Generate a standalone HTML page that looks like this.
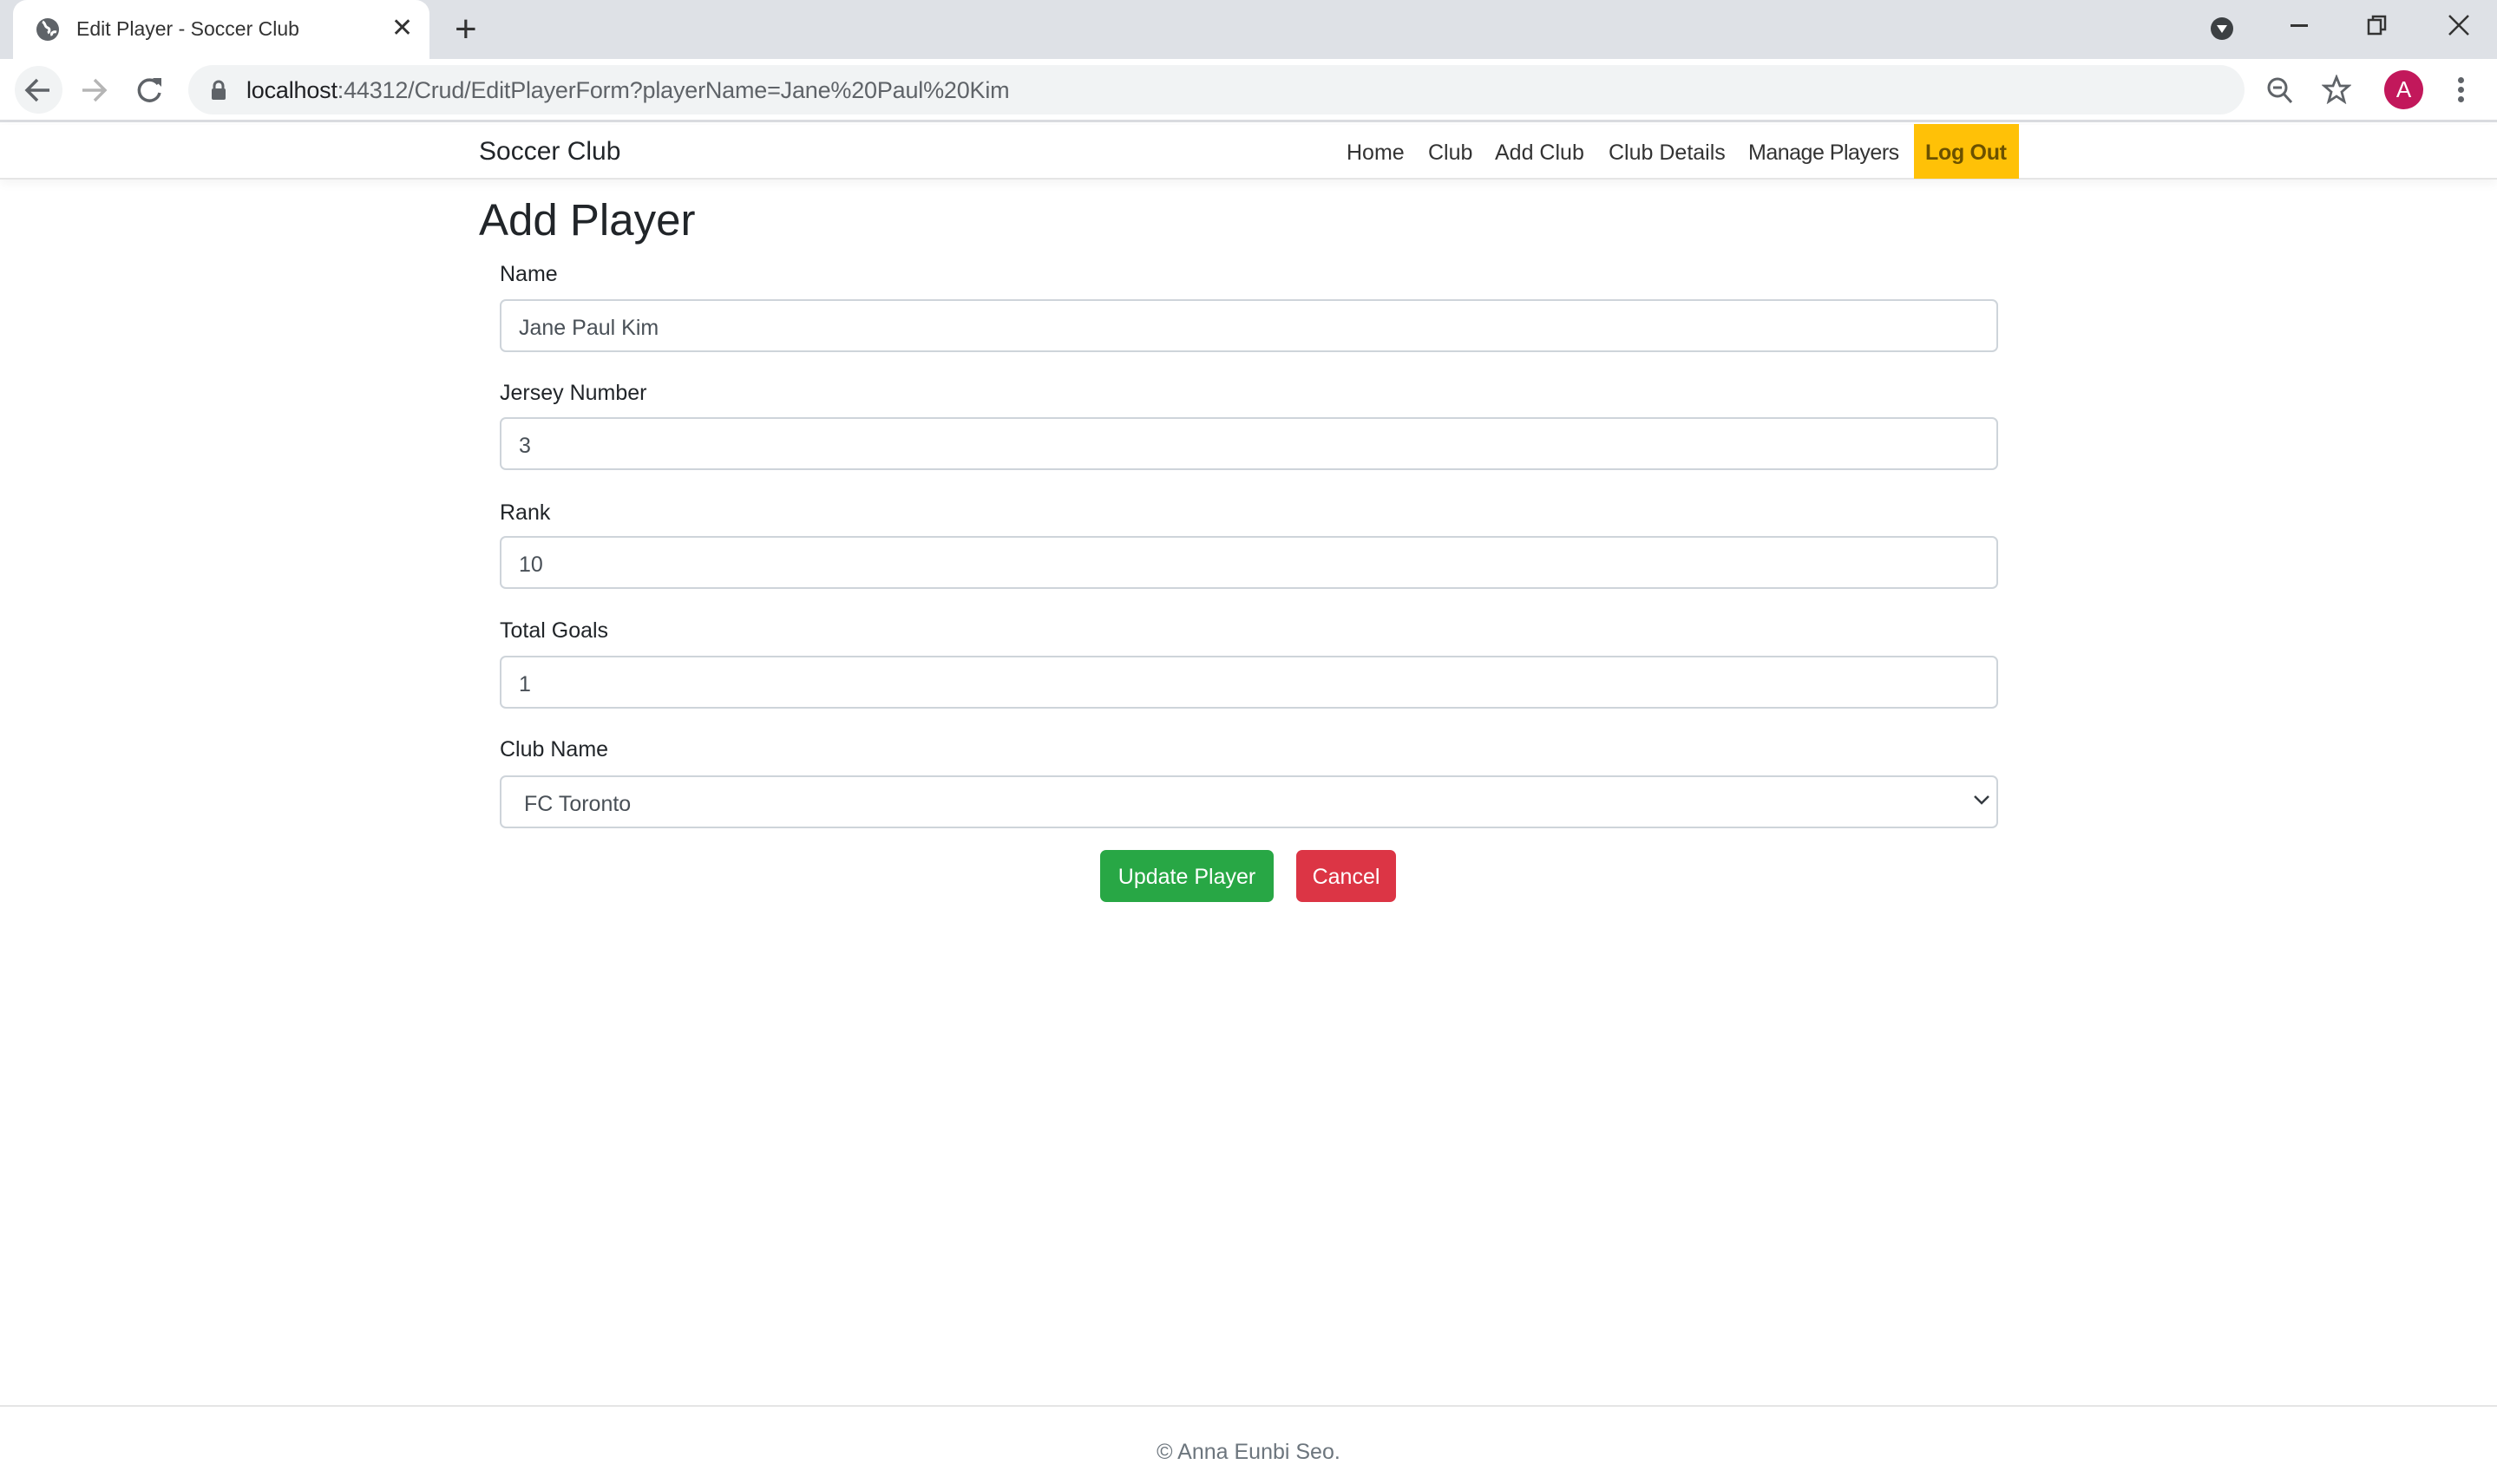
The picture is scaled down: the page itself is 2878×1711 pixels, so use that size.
<!DOCTYPE html>
<html><head><meta charset="utf-8"><style>
*{box-sizing:border-box;margin:0;padding:0}
body{width:2878px;height:1711px;position:relative;background:#fff;font-family:"Liberation Sans",sans-serif;color:#212529;overflow:hidden}
.abs{position:absolute}
.tabbar{left:0;top:0;width:2878px;height:68px;background:#dee1e6}
.tab{left:15px;top:0;width:480px;height:68px;background:#fff;border-radius:16px 16px 0 0}
.toolbar{left:0;top:68px;width:2878px;height:73px;background:#fff;border-bottom:3px solid #dadce0}
.omni{left:217px;top:75px;width:2370px;height:57px;background:#f1f3f4;border-radius:29px}
.nav{left:0;top:144px;width:2878px;height:63px;border-bottom:2px solid #e5e5e5;box-shadow:0 4px 12px rgba(0,0,0,.05)}
.navlink{top:162px;font-size:25px;color:#333}
label{position:absolute;left:576px;font-size:25px;color:#212529}
.inp{position:absolute;left:576px;width:1727px;height:61px;border:2px solid #ced4da;border-radius:7px;font-size:25px;color:#495057;padding:17px 0 0 20px}
.btn{position:absolute;top:980px;height:60px;border-radius:7px;color:#fff;font-size:25px;text-align:center;line-height:62px}
</style></head><body>
<div class="abs tabbar"></div>
<div class="abs tab"></div>
<svg class="abs" style="left:40px;top:19px" width="30" height="30" viewBox="0 0 30 30"><circle cx="15" cy="15" r="13" fill="#5f6368"/><path d="M9 6c4 2 2 6 6 7 3 1 2 5 0 6M20 22c-2-3 2-5 5-4" stroke="#fff" stroke-width="3" fill="none"/></svg>
<div class="abs" style="left:88px;top:20px;font-size:23px;color:#333">Edit Player - Soccer Club</div>
<div class="abs" style="left:451px;top:15px;font-size:30px;color:#333">✕</div>
<div class="abs" style="left:524px;top:9px;font-size:44px;color:#333;font-weight:300">+</div>
<svg class="abs" style="left:2547px;top:18px" width="28" height="30"><circle cx="14" cy="15" r="13" fill="#3c4043"/><path d="M8 11h12l-6 9z" fill="#fff"/></svg>
<div class="abs" style="left:2640px;top:28px;width:20px;height:3px;background:#333"></div>
<svg class="abs" style="left:2728px;top:17px" width="24" height="24"><rect x="2" y="6" width="14" height="16" fill="none" stroke="#333" stroke-width="2.5"/><path d="M7 6V2h14v15h-5" fill="none" stroke="#333" stroke-width="2.5"/></svg>
<svg class="abs" style="left:2821px;top:16px" width="26" height="26"><path d="M2 2l22 22M24 2L2 24" stroke="#333" stroke-width="2.5"/></svg>
<div class="abs toolbar"></div>
<div class="abs" style="left:17px;top:76px;width:55px;height:55px;border-radius:50%;background:#f1f3f4"></div>
<svg class="abs" style="left:27px;top:88px" width="34" height="32"><path d="M30 16H5M16 4L4 16l12 12" stroke="#5f6368" stroke-width="3.5" fill="none"/></svg>
<svg class="abs" style="left:92px;top:88px" width="34" height="32"><path d="M3 16h25M17 4l12 12-12 12" stroke="#b5b5b5" stroke-width="3.5" fill="none"/></svg>
<svg class="abs" style="left:156px;top:87px" width="34" height="34"><path d="M26 10A12 12 0 1 0 28 20" stroke="#5f6368" stroke-width="3.5" fill="none"/><path d="M20 3h10v10z" fill="#5f6368"/></svg>
<div class="abs omni"></div>
<svg class="abs" style="left:243px;top:92px" width="18" height="24"><path d="M4 10V7a5 5 0 0 1 10 0v3" stroke="#5f6368" stroke-width="3" fill="none"/><rect x="1" y="10" width="16" height="13" rx="2" fill="#5f6368"/></svg>
<div class="abs" style="left:284px;top:89px;font-size:27px;letter-spacing:-0.2px;color:#202124">localhost<span style="color:#5f6368">:44312/Crud/EditPlayerForm?playerName=Jane%20Paul%20Kim</span></div>
<svg class="abs" style="left:2612px;top:88px" width="32" height="34"><circle cx="13" cy="13" r="10" stroke="#5f6368" stroke-width="3" fill="none"/><path d="M8 13h10M20 20l9 10" stroke="#5f6368" stroke-width="3"/></svg>
<svg class="abs" style="left:2676px;top:86px" width="34" height="34"><path d="M17 3l4 10h10l-8 7 3 11-9-6-9 6 3-11-8-7h10z" stroke="#5f6368" stroke-width="2.8" fill="none"/></svg>
<div class="abs" style="left:2748px;top:81px;width:45px;height:45px;border-radius:50%;background:#c2185b;color:#fff;font-size:26px;text-align:center;line-height:45px">A</div>
<div class="abs" style="left:2833px;top:89px;width:7px;height:7px;border-radius:50%;background:#5f6368;box-shadow:0 11px 0 #5f6368,0 22px 0 #5f6368"></div>

<div class="abs nav"></div>
<div class="abs" style="left:552px;top:158px;font-size:30px;color:#212529">Soccer Club</div>
<div class="abs navlink" style="left:1552px">Home</div>
<div class="abs navlink" style="left:1646px">Club</div>
<div class="abs navlink" style="left:1723px">Add Club</div>
<div class="abs navlink" style="left:1854px">Club Details</div>
<div class="abs navlink" style="left:2015px;letter-spacing:-0.5px">Manage Players</div>
<div class="abs" style="left:2206px;top:143px;width:121px;height:63px;background:#ffc107"></div>
<div class="abs navlink" style="left:2219px;font-weight:bold;color:#6b5100;letter-spacing:-0.3px">Log Out</div>

<div class="abs" style="left:552px;top:224px;font-size:51px;color:#212529">Add Player</div>

<label style="top:302px">Name</label>
<div class="inp" style="top:345px">Jane Paul Kim</div>
<label style="top:439px">Jersey Number</label>
<div class="inp" style="top:481px">3</div>
<label style="top:577px">Rank</label>
<div class="inp" style="top:618px">10</div>
<label style="top:713px">Total Goals</label>
<div class="inp" style="top:756px">1</div>
<label style="top:850px">Club Name</label>
<div class="inp" style="top:894px;padding-left:26px">FC Toronto</div>
<svg class="abs" style="left:2274px;top:915px" width="20" height="14"><path d="M2 3l8 8 8-8" stroke="#343a40" stroke-width="2.5" fill="none"/></svg>

<div class="btn" style="left:1268px;width:200px;background:#28a745">Update Player</div>
<div class="btn" style="left:1494px;width:115px;background:#dc3545">Cancel</div>

<div class="abs" style="left:0;top:1620px;width:2878px;height:2px;background:#e5e5e5"></div>
<div class="abs" style="left:0;top:1660px;width:2878px;text-align:center;font-size:25px;color:#6c757d">© Anna Eunbi Seo.</div>
</body></html>
